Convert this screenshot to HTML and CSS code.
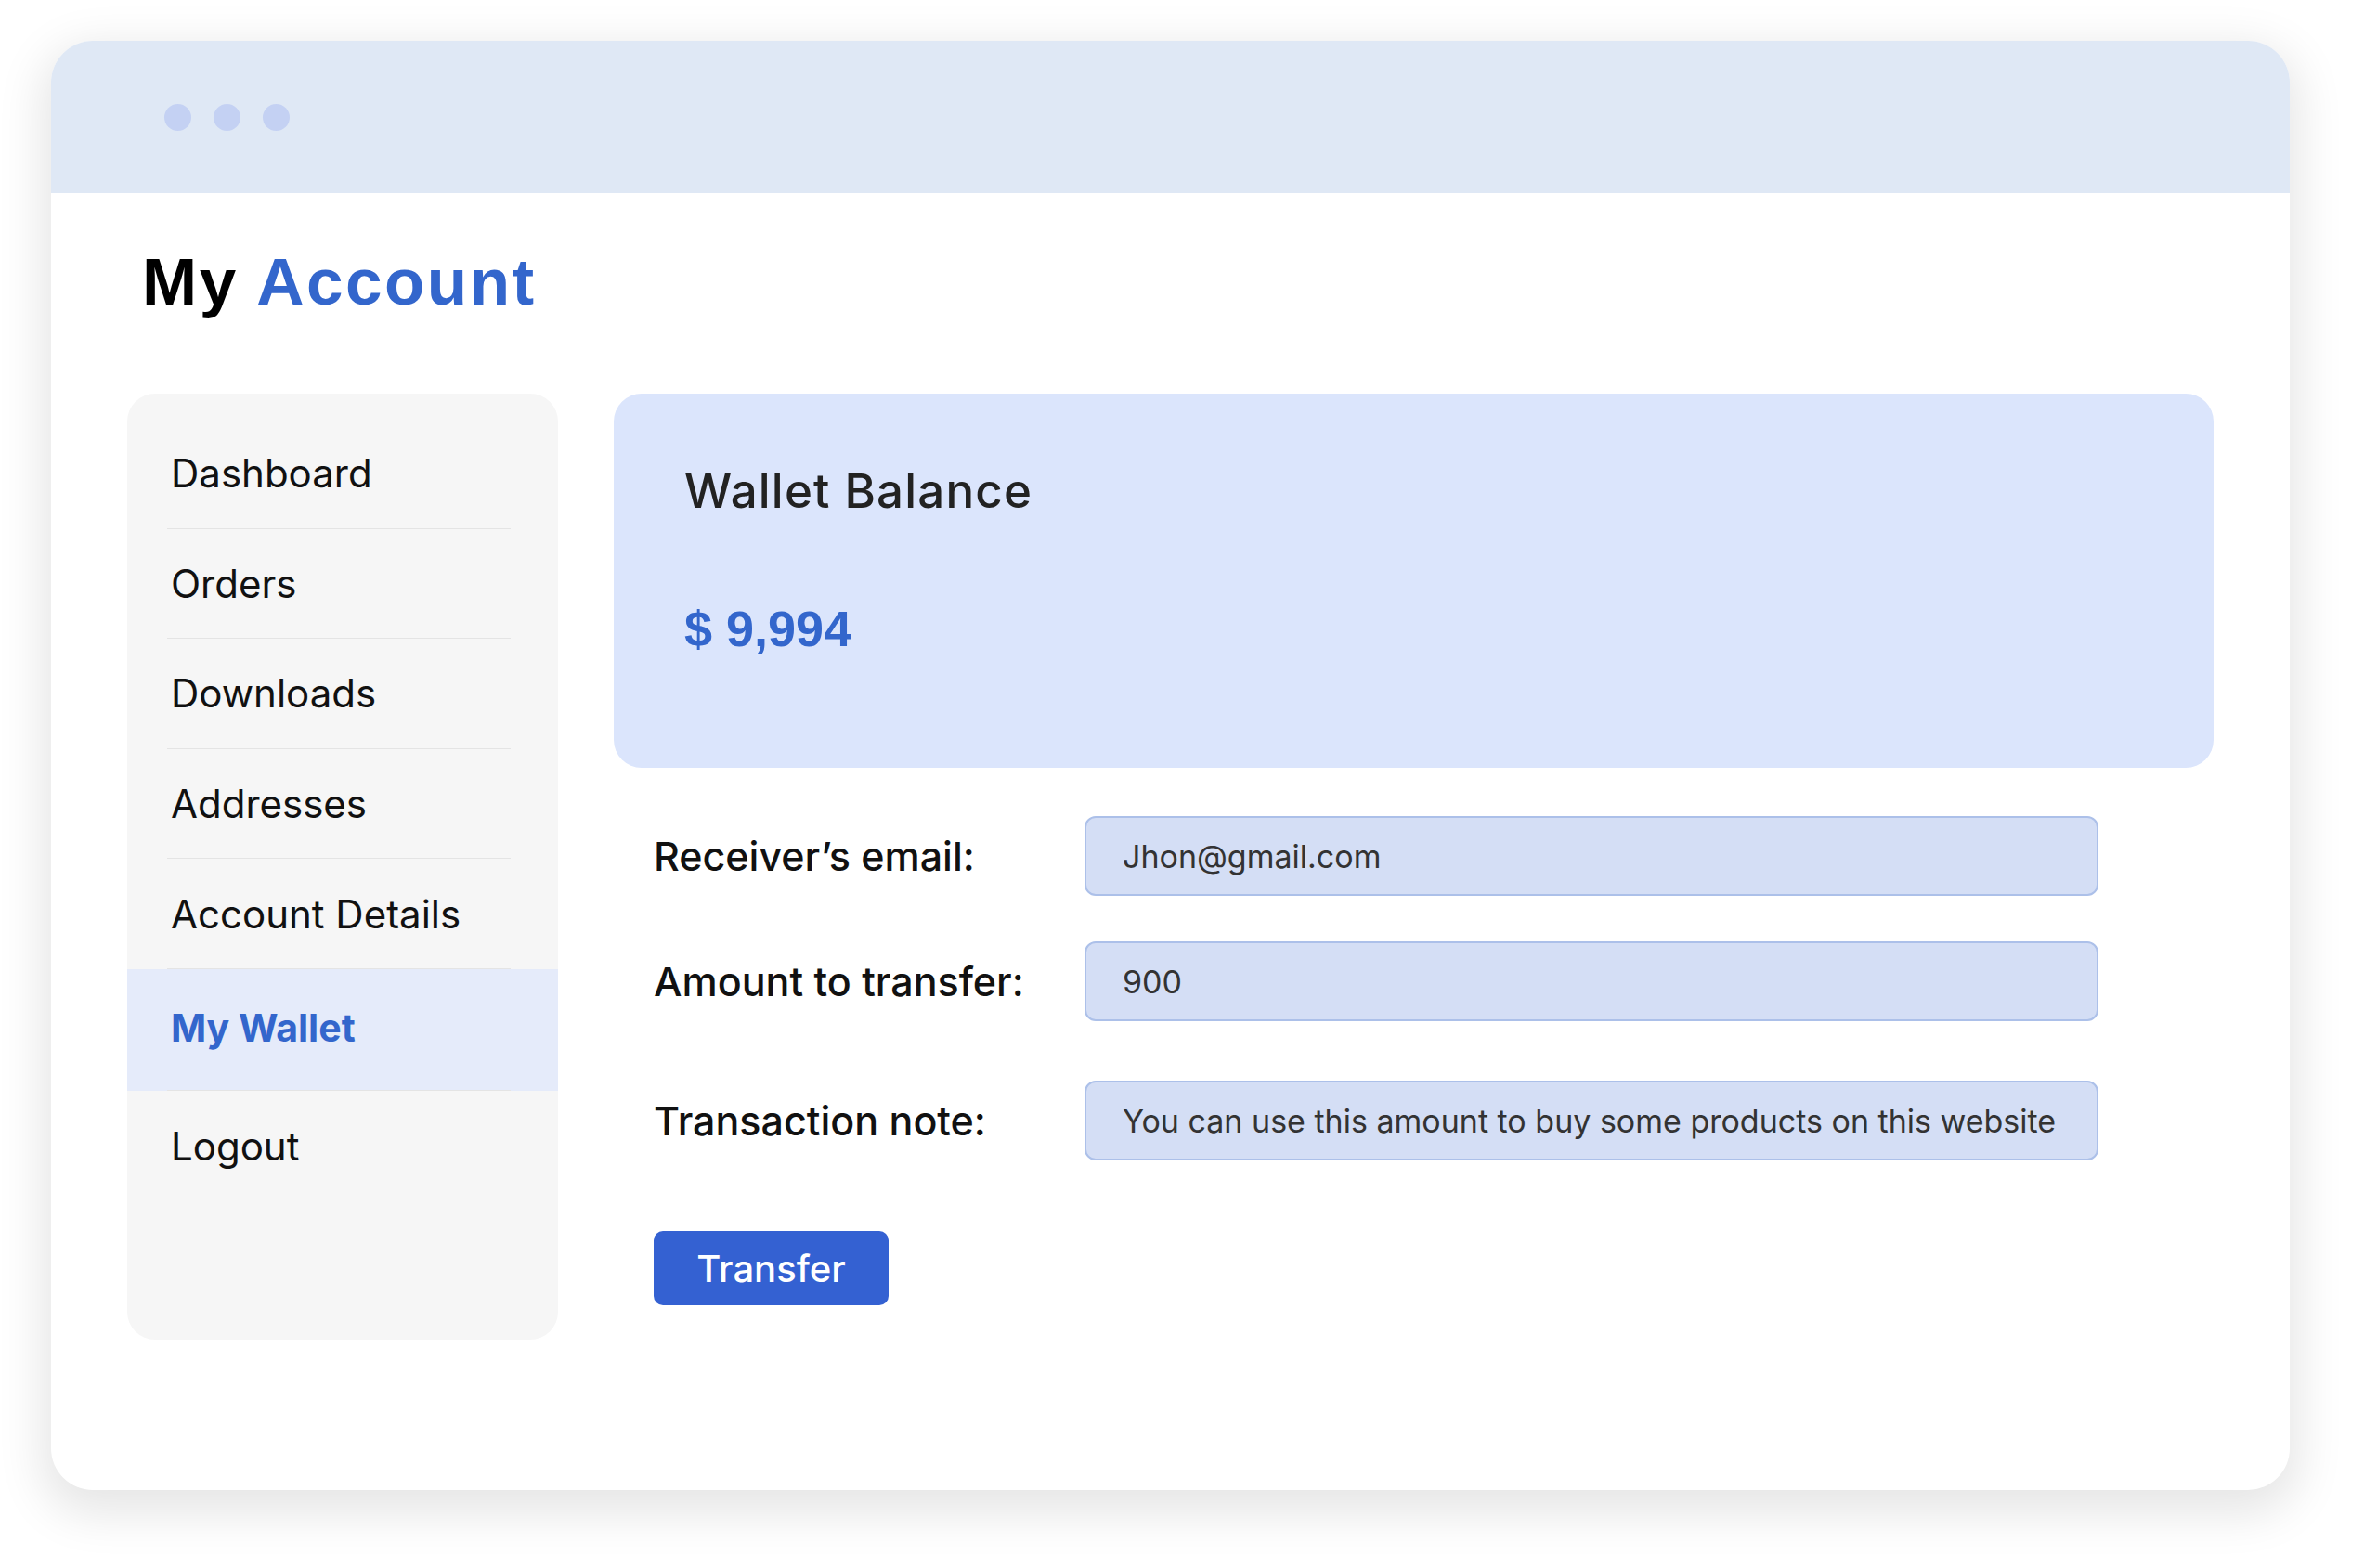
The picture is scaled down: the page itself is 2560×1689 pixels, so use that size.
FILE: index.html
```html
<!DOCTYPE html>
<html>
	<head>
		<meta charset="utf-8">
		<title>My Account</title>
		<link rel="stylesheet" href="styles.css">
	</head>
	<body>
		<div class="window">
			<div class="window-bar">
				<span class="dot"></span>
				<span class="dot"></span>
				<span class="dot"></span>
			</div>
			<div class="window-body">
				<h1 class="title">My <span>Account</span></h1>
				<div class="account">
					<ul class="menu">
						<li><a href="##">Dashboard</a></li>
						<li><a href="##">Orders</a></li>
						<li><a href="##">Downloads</a></li>
						<li><a href="##">Addresses</a></li>
						<li><a href="##">Account Details</a></li>
						<li class="active"><a href="##">My Wallet</a></li>
						<li class="last"><a href="##">Logout</a></li>
					</ul>
					<div class="main">
						<div class="balance">
							<h2>Wallet Balance</h2>
							<p class="amount">$ 9,994</p>
						</div>
						<form class="transfer" action="" method="">
							<div class="row">
								<label for="email">Receiver’s email:</label>
								<input type="text" id="email" value="Jhon@gmail.com">
							</div>
							<div class="row row2">
								<label for="amount">Amount to transfer:</label>
								<input type="text" id="amount" value="900">
							</div>
							<div class="row row3">
								<label for="note">Transaction note:</label>
								<input type="text" id="note" value="You can use this amount to buy some products on this website">
							</div>
							<button type="button" class="submit">Transfer</button>
						</form>
					</div>
				</div>
			</div>
		</div>
	</body>
</html>
```

FILE: styles.css
```css
*{
	margin: 0;
	padding: 0;
	box-sizing: border-box;
}
body{
	background-color: #fff;
	padding: 44px 0 80px 55px;
	font-family: Inter, "Noto Sans", sans-serif;
	color: #111;
}
.window{
	width: 2411px;
	height: 1561px;
	background-color: #fff;
	border-radius: 45px;
	overflow: hidden;
	box-shadow: 0 16px 50px 10px rgba(0,0,0,.1);
}
.window-bar{
	height: 164px;
	background-color: #dfe8f5;
	display: flex;
	align-items: center;
	gap: 24px;
	padding-left: 122px;
}
.dot{
	width: 29px;
	height: 29px;
	border-radius: 50%;
	background-color: #c4d1f3;
}
.window-body{
	padding: 0 82px;
}
.title{
	font-family: "Liberation Sans", Arial, sans-serif;
	font-size: 71px;
	line-height: 1;
	font-weight: 700;
	letter-spacing: 2.5px;
	color: #000;
	margin: 60px 0 0 16px;
}
.title span{
	color: #3366cc;
}
.account{
	display: flex;
	gap: 60px;
	margin-top: 85px;
}
/* 左侧菜单 */
.menu{
	list-style: none;
	width: 464px;
	height: 1019px;
	flex-shrink: 0;
	background-color: #f6f6f6;
	border-radius: 30px;
	padding-top: 27px;
}
.menu li{
	height: 118.6px;
}
.menu li a{
	display: flex;
	align-items: center;
	height: 100%;
	margin: 0 51px 0 43px;
	padding-left: 4px;
	border-bottom: 1px solid #e4e4e4;
	text-decoration: none;
	color: #111;
	font-size: 42px;
}
.menu li.active{
	height: 131px;
	background-color: #e5ebfa;
}
.menu li.active a{
	color: #3366cc;
	font-weight: 700;
	font-size: 41px;
	padding-bottom: 4px;
}
.menu li.last a{
	border-bottom: none;
}
/* 右侧 */
.main{
	flex: 1;
}
.balance{
	height: 403px;
	background-color: #dbe5fc;
	border-radius: 30px;
	padding: 79px 0 0 76px;
}
.balance h2{
	font-size: 51px;
	line-height: 1;
	font-weight: 500;
	letter-spacing: 1.2px;
	color: #222;
}
.amount{
	font-family: "Liberation Sans", Arial, sans-serif;
	font-size: 54px;
	line-height: 1;
	font-weight: 700;
	color: #3366cc;
	margin-top: 96px;
}
.transfer{
	padding-left: 43px;
	margin-top: 52px;
}
.row{
	display: flex;
	align-items: center;
}
.row2{
	margin-top: 49px;
}
.row3{
	margin-top: 64px;
}
.row label{
	width: 464px;
	font-size: 43px;
	font-weight: 500;
	color: #111;
}
.row input{
	width: 1092px;
	height: 86px;
	background-color: #d4def5;
	border: 2px solid #acc0e9;
	border-radius: 12px;
	padding-left: 39px;
	font-family: Inter, "Noto Sans", sans-serif;
	font-size: 34px;
	color: #333;
	outline: none;
}
.submit{
	display: block;
	width: 253px;
	height: 80px;
	margin-top: 76px;
	background-color: #3461d2;
	border: none;
	border-radius: 10px;
	color: #fff;
	font-family: Inter, "Noto Sans", sans-serif;
	font-size: 40px;
	font-weight: 500;
}
```
